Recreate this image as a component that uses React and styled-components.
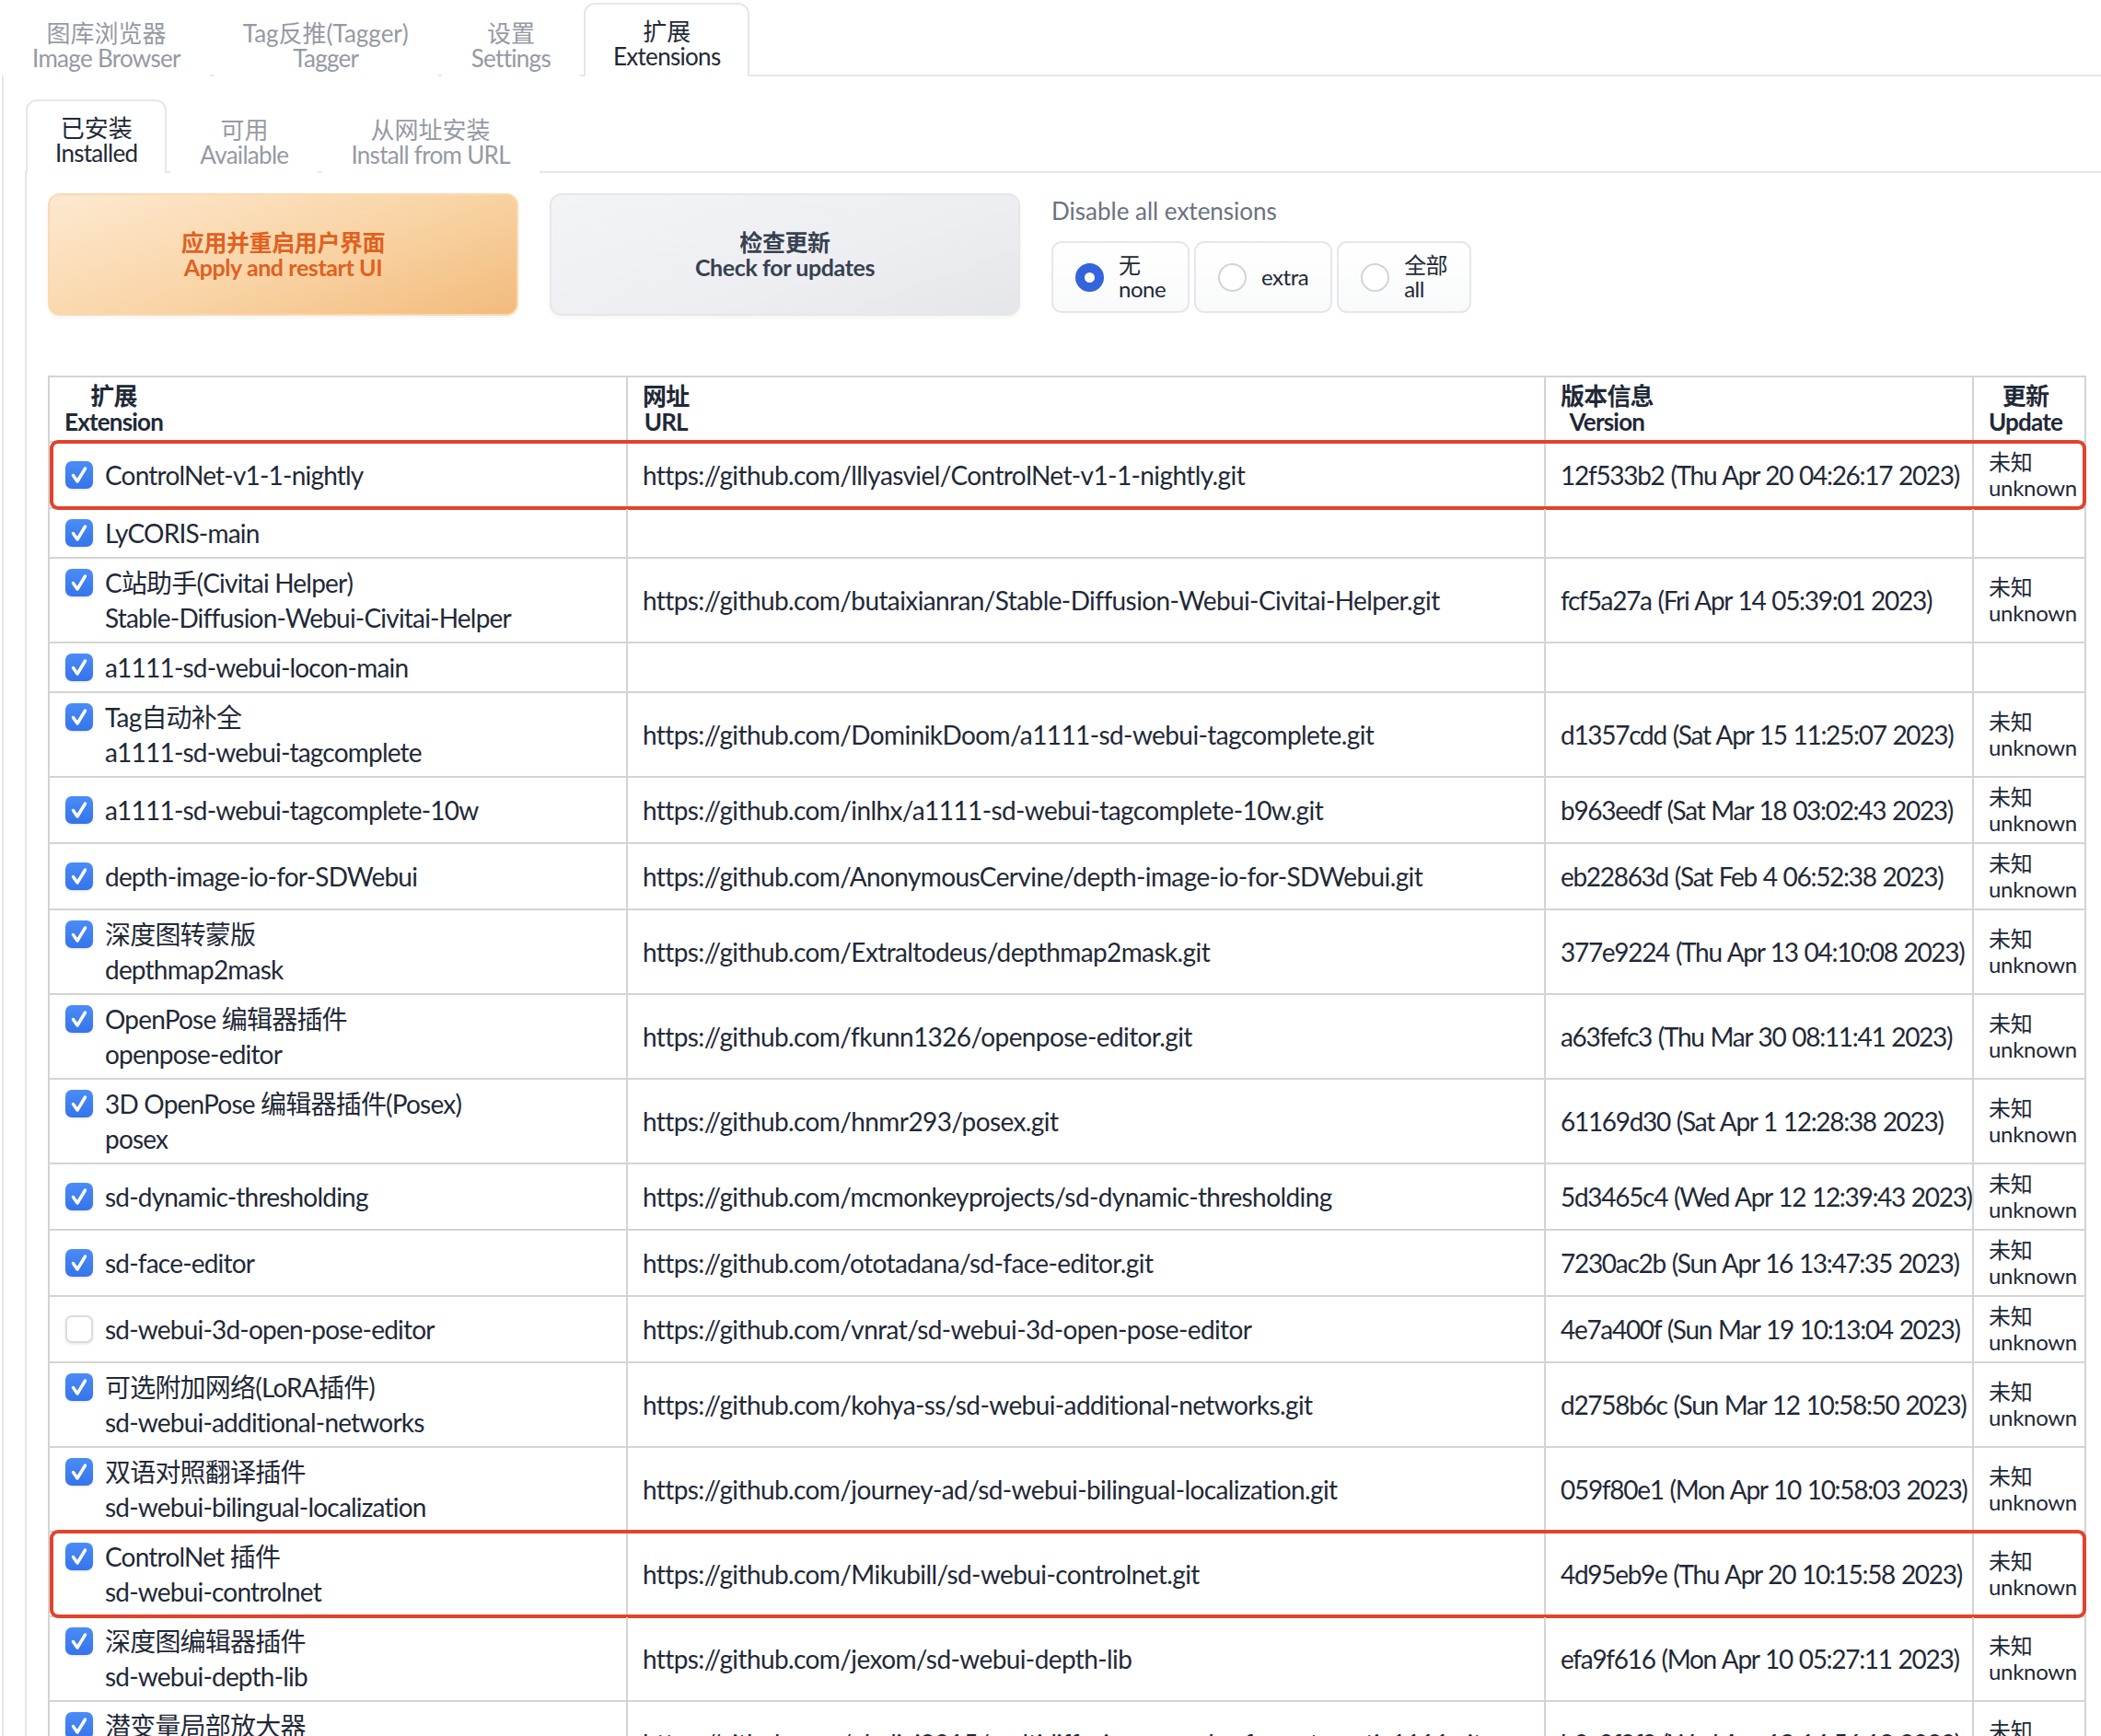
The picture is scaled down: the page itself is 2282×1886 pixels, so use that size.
import React from "react";
import styled, { createGlobalStyle } from "styled-components";

const FONT = `"Lato", "Noto Sans CJK SC", sans-serif`;

const GlobalStyle = createGlobalStyle`
  html, body {
    margin: 0;
    padding: 0;
    background: #ffffff;
  }
  body {
    font-family: ${FONT};
    color: #1f2937;
  }
`;

const extensions = [
  {
    name: "ControlNet-v1-1-nightly",
    url: "https://github.com/lllyasviel/ControlNet-v1-1-nightly.git",
    version: "12f533b2 (Thu Apr 20 04:26:17 2023)",
    highlight: true,
  },
  { name: "LyCORIS-main" },
  {
    cn: "C站助手(Civitai Helper)",
    name: "Stable-Diffusion-Webui-Civitai-Helper",
    url: "https://github.com/butaixianran/Stable-Diffusion-Webui-Civitai-Helper.git",
    version: "fcf5a27a (Fri Apr 14 05:39:01 2023)",
  },
  { name: "a1111-sd-webui-locon-main" },
  {
    cn: "Tag自动补全",
    name: "a1111-sd-webui-tagcomplete",
    url: "https://github.com/DominikDoom/a1111-sd-webui-tagcomplete.git",
    version: "d1357cdd (Sat Apr 15 11:25:07 2023)",
  },
  {
    name: "a1111-sd-webui-tagcomplete-10w",
    url: "https://github.com/inlhx/a1111-sd-webui-tagcomplete-10w.git",
    version: "b963eedf (Sat Mar 18 03:02:43 2023)",
  },
  {
    name: "depth-image-io-for-SDWebui",
    url: "https://github.com/AnonymousCervine/depth-image-io-for-SDWebui.git",
    version: "eb22863d (Sat Feb 4 06:52:38 2023)",
  },
  {
    cn: "深度图转蒙版",
    name: "depthmap2mask",
    url: "https://github.com/Extraltodeus/depthmap2mask.git",
    version: "377e9224 (Thu Apr 13 04:10:08 2023)",
  },
  {
    cn: "OpenPose 编辑器插件",
    name: "openpose-editor",
    url: "https://github.com/fkunn1326/openpose-editor.git",
    version: "a63fefc3 (Thu Mar 30 08:11:41 2023)",
  },
  {
    cn: "3D OpenPose 编辑器插件(Posex)",
    name: "posex",
    url: "https://github.com/hnmr293/posex.git",
    version: "61169d30 (Sat Apr 1 12:28:38 2023)",
  },
  {
    name: "sd-dynamic-thresholding",
    url: "https://github.com/mcmonkeyprojects/sd-dynamic-thresholding",
    version: "5d3465c4 (Wed Apr 12 12:39:43 2023)",
  },
  {
    name: "sd-face-editor",
    url: "https://github.com/ototadana/sd-face-editor.git",
    version: "7230ac2b (Sun Apr 16 13:47:35 2023)",
  },
  {
    name: "sd-webui-3d-open-pose-editor",
    url: "https://github.com/vnrat/sd-webui-3d-open-pose-editor",
    version: "4e7a400f (Sun Mar 19 10:13:04 2023)",
    off: true,
  },
  {
    cn: "可选附加网络(LoRA插件)",
    name: "sd-webui-additional-networks",
    url: "https://github.com/kohya-ss/sd-webui-additional-networks.git",
    version: "d2758b6c (Sun Mar 12 10:58:50 2023)",
  },
  {
    cn: "双语对照翻译插件",
    name: "sd-webui-bilingual-localization",
    url: "https://github.com/journey-ad/sd-webui-bilingual-localization.git",
    version: "059f80e1 (Mon Apr 10 10:58:03 2023)",
  },
  {
    cn: "ControlNet 插件",
    name: "sd-webui-controlnet",
    url: "https://github.com/Mikubill/sd-webui-controlnet.git",
    version: "4d95eb9e (Thu Apr 20 10:15:58 2023)",
    highlight: true,
  },
  {
    cn: "深度图编辑器插件",
    name: "sd-webui-depth-lib",
    url: "https://github.com/jexom/sd-webui-depth-lib",
    version: "efa9f616 (Mon Apr 10 05:27:11 2023)",
  },
  {
    cn: "潜变量局部放大器",
    name: "multidiffusion-upscaler-for-automatic1111",
    url: "https://github.com/pkuliyi2015/multidiffusion-upscaler-for-automatic1111.git",
    version: "b0c0f2f3 (Wed Apr 19 14:56:18 2023)",
  },
];

function Check({ on }) {
  return (
    <CheckBox $on={on}>
      {on && (
        <svg width="30" height="30" viewBox="0 0 30 30">
          <path
            d="M8.5 15.5 L13 22 L21.5 8"
            fill="none"
            stroke="#fff"
            strokeWidth="3.4"
            strokeLinecap="round"
            strokeLinejoin="round"
          />
        </svg>
      )}
    </CheckBox>
  );
}

function App() {
  return (
    <Page>
      <GlobalStyle />
      {/* top tabs */}
      <TabNav>
        <Tab>
          <span>图库浏览器</span>
          <span>Image Browser</span>
        </Tab>
        <Tab>
          <span>Tag反推(Tagger)</span>
          <span>Tagger</span>
        </Tab>
        <Tab>
          <span>设置</span>
          <span>Settings</span>
        </Tab>
        <Tab $active>
          <span>扩展</span>
          <span>Extensions</span>
        </Tab>
      </TabNav>
      <Panel>
        {/* sub tabs */}
        <TabNav>
          <Tab $active>
            <span>已安装</span>
            <span>Installed</span>
          </Tab>
          <Tab>
            <span>可用</span>
            <span>Available</span>
          </Tab>
          <Tab>
            <span>从网址安装</span>
            <span>Install from URL</span>
          </Tab>
        </TabNav>
        <Panel>
          <Controls>
            <BigButton $primary>
              <span>应用并重启用户界面</span>
              <span>Apply and restart UI</span>
            </BigButton>
            <BigButton>
              <span>检查更新</span>
              <span>Check for updates</span>
            </BigButton>
            <RadioGroup>
              <GroupLabel>Disable all extensions</GroupLabel>
              <RadioRow>
                <RadioOption>
                  <RadioDot $on />
                  <RadioText>
                    <span>无</span>
                    <span>none</span>
                  </RadioText>
                </RadioOption>
                <RadioOption>
                  <RadioDot />
                  <RadioText>
                    <span>extra</span>
                  </RadioText>
                </RadioOption>
                <RadioOption>
                  <RadioDot />
                  <RadioText>
                    <span>全部</span>
                    <span>all</span>
                  </RadioText>
                </RadioOption>
              </RadioRow>
            </RadioGroup>
          </Controls>

          <Table>
            <HeadRow>
              <HeadCell>
                <HeadLabel>
                  <span>扩展</span>
                  <span>Extension</span>
                </HeadLabel>
              </HeadCell>
              <HeadCell>
                <HeadLabel>
                  <span>网址</span>
                  <span>URL</span>
                </HeadLabel>
              </HeadCell>
              <HeadCell>
                <HeadLabel>
                  <span>版本信息</span>
                  <span>Version</span>
                </HeadLabel>
              </HeadCell>
              <HeadCell>
                <HeadLabel>
                  <span>更新</span>
                  <span>Update</span>
                </HeadLabel>
              </HeadCell>
            </HeadRow>
            {extensions.map((ext) => (
              <Row key={ext.name} $highlight={ext.highlight}>
                <NameCell>
                  <Check on={!ext.off} />
                  <NameText>
                    {ext.cn && <span>{ext.cn}</span>}
                    <span>{ext.name}</span>
                  </NameText>
                </NameCell>
                <Cell>{ext.url}</Cell>
                <VersionCell>{ext.version}</VersionCell>
                <UpdateCell>
                  {ext.url && (
                    <>
                      <span>未知</span>
                      <span>unknown</span>
                    </>
                  )}
                </UpdateCell>
              </Row>
            ))}
          </Table>
        </Panel>
      </Panel>
    </Page>
  );
}

const Page = styled.div`
  width: 2282px;
  height: 1886px;
  overflow: hidden;
  padding-left: 2px;
  box-sizing: border-box;
  background: #fff;
  letter-spacing: -0.5px;
`;

// tabs
const TabNav = styled.div`
  display: flex;
  gap: 4px;
  height: 83px;
  padding-left: 1px;
  border-bottom: 2px solid #e5e7eb;
  box-sizing: border-box;
  align-items: flex-end;
`;

const Tab = styled.div`
  display: flex;
  flex-direction: column;
  align-items: center;
  justify-content: center;
  height: ${(p) => (p.$active ? "80px" : "78px")};
  padding: ${(p) => (p.$active ? "8px" : "10px")} 30px 0;
  margin-bottom: -2px;
  box-sizing: border-box;
  font-size: 26px;
  line-height: 27px;
  letter-spacing: -0.7px;
  color: ${(p) => (p.$active ? "#1f2937" : "#959aa3")};
  background: #fff;
  border: 2px solid ${(p) => (p.$active ? "#e5e7eb" : "transparent")};
  border-bottom: none;
  border-radius: 12px 12px 0 0;
  white-space: nowrap;
  span:first-child {
    letter-spacing: 0;
  }
`;

const Panel = styled.div`
  border-left: 2px solid #e5e7eb;
  padding: 22px 0 0 23px;
`;

// controls
const Controls = styled.div`
  display: flex;
  gap: 34px;
  height: 133px;
`;

const BigButton = styled.div`
  width: 511px;
  height: 133px;
  box-sizing: border-box;
  display: flex;
  flex-direction: column;
  align-items: center;
  justify-content: center;
  border-radius: 13px;
  font-size: 25px;
  line-height: 27px;
  font-weight: 700;
  letter-spacing: -0.4px;
  color: ${(p) => (p.$primary ? "#e0611f" : "#374151")};
  border: 2px solid ${(p) => (p.$primary ? "#fbd9b0" : "#e5e7eb")};
  background: ${(p) =>
    p.$primary
      ? "linear-gradient(160deg, #fde9d0 0%, #f9d3a4 55%, #f2bb7c 100%)"
      : "linear-gradient(160deg, #f3f4f6 0%, #eceef1 60%, #e4e6ea 100%)"};
  box-shadow: 0 2px 4px rgba(0, 0, 0, 0.05);
`;

const RadioGroup = styled.div`
  display: flex;
  flex-direction: column;
`;

const GroupLabel = styled.div`
  font-size: 26px;
  line-height: 30px;
  color: #6b7280;
  letter-spacing: 0;
  padding: 4px 0 0 0;
  height: 52px;
  box-sizing: border-box;
`;

const RadioRow = styled.div`
  display: flex;
  gap: 5px;
`;

const RadioOption = styled.div`
  display: flex;
  align-items: center;
  gap: 16px;
  height: 78px;
  padding: 0 24px;
  box-sizing: border-box;
  border: 2px solid #e5e7eb;
  border-radius: 11px;
  background: linear-gradient(to bottom, #ffffff, #f9fafb);
`;

const RadioDot = styled.div`
  width: 31px;
  height: 31px;
  flex: none;
  border-radius: 50%;
  box-sizing: border-box;
  background: #fff;
  border: ${(p) => (p.$on ? "10px solid #3464dc" : "2px solid #d1d5db")};
`;

const RadioText = styled.div`
  display: flex;
  flex-direction: column;
  font-size: 24px;
  line-height: 26px;
  color: #1f2937;
`;

// table
const COLUMNS = "628px 997px 465px 1fr";

const Table = styled.div`
  margin-top: 65px;
  width: 2214px;
  border: 2px solid #d4d4d4;
  border-bottom: none;
  box-sizing: border-box;
`;

const HeadRow = styled.div`
  display: grid;
  grid-template-columns: ${COLUMNS};
  border-bottom: 2px solid #d4d4d4;
`;

const HeadCell = styled.div`
  padding: 6px 16px 7px;
  border-right: 2px solid #d4d4d4;
  &:last-child {
    border-right: none;
  }
`;

const HeadLabel = styled.div`
  display: inline-flex;
  flex-direction: column;
  align-items: center;
  font-size: 26px;
  line-height: 28px;
  font-weight: 700;
  letter-spacing: -0.8px;
  color: #1f2937;
`;

const Row = styled.div`
  position: relative;
  display: grid;
  grid-template-columns: ${COLUMNS};
  border-bottom: 2px solid #d4d4d4;
  &::after {
    content: "";
    display: ${(p) => (p.$highlight ? "block" : "none")};
    position: absolute;
    left: 0;
    right: -2px;
    top: -3px;
    bottom: -3px;
    border: 4px solid #e2432b;
    border-radius: 9px;
    pointer-events: none;
  }
`;

const Cell = styled.div`
  display: flex;
  align-items: center;
  padding: 7px 16px;
  border-right: 2px solid #d4d4d4;
  font-size: 28px;
  line-height: 38px;
  letter-spacing: -0.6px;
  color: #1f2937;
  white-space: nowrap;
  overflow: hidden;
`;

const VersionCell = styled(Cell)`
  letter-spacing: -1.3px;
  word-spacing: 1px;
`;

const NameCell = styled(Cell)`
  align-items: center;
  gap: 13px;
  padding-left: 17px;
  letter-spacing: -0.8px;
`;

const NameText = styled.div`
  display: flex;
  flex-direction: column;
`;

const CheckBox = styled.div`
  align-self: center;
  width: 30px;
  height: 30px;
  flex: none;
  border-radius: 7px;
  box-sizing: border-box;
  background: ${(p) =>
    p.$on ? "linear-gradient(to bottom, #4a8cf7, #3574ea)" : "#fff"};
  border: ${(p) => (p.$on ? "none" : "2px solid #d9dce1")};
  box-shadow: 0 1px 3px rgba(0, 0, 0, 0.12);
  svg {
    display: block;
  }
  ${NameCell}:has(span + span) > & {
    align-self: flex-start;
    margin-top: 4px;
  }
`;

const UpdateCell = styled.div`
  display: flex;
  flex-direction: column;
  justify-content: center;
  padding: 7px 16px;
  font-size: 24px;
  line-height: 28px;
  letter-spacing: -0.3px;
  color: #1f2937;
`;

export default App;
